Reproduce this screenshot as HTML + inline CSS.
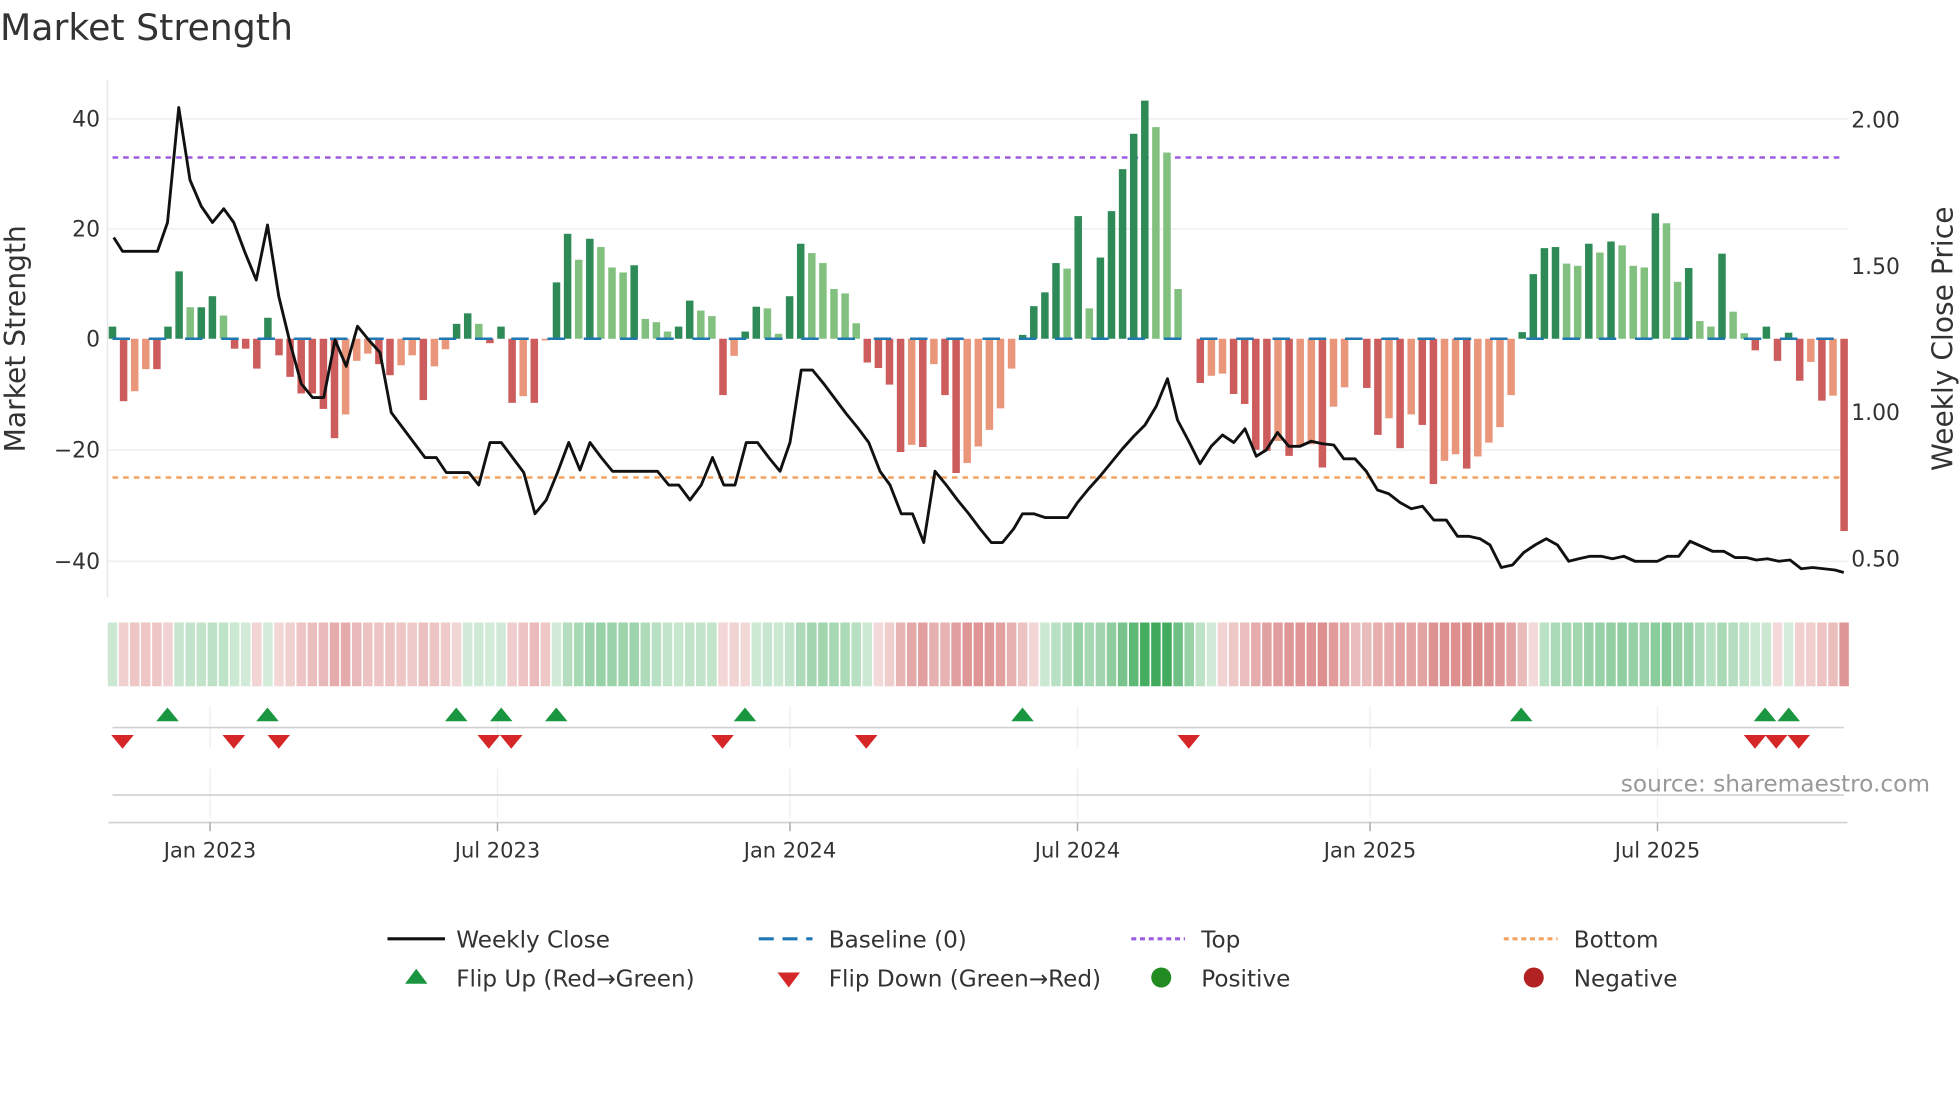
<!DOCTYPE html>
<html><head><meta charset="utf-8">
<style>
html,body{margin:0;padding:0;background:#fff;}
svg{display:block;font-family:"DejaVu Sans","Liberation Sans",sans-serif;}
</style></head>
<body>
<svg id="s" xmlns="http://www.w3.org/2000/svg" width="1960" height="1102" viewBox="0 0 1568 881.6">
<rect width="1568" height="881.6" fill="#fff"/>
<text x="0" y="32" font-size="29" fill="#333">Market Strength</text>
<line x1="86" y1="64" x2="86" y2="478" stroke="#e8e8ec" stroke-width="1.2"/>
<g stroke="#eef0f4" stroke-width="1.3">
<line x1="86" y1="95" x2="1478" y2="95"/>
<line x1="86" y1="183" x2="1478" y2="183"/>
<line x1="86" y1="360" x2="1478" y2="360"/>
<line x1="86" y1="449" x2="1478" y2="449"/>
</g>
<g font-size="17.5" fill="#333" text-anchor="end">
<text x="80" y="101">40</text>
<text x="80" y="189">20</text>
<text x="80" y="277">0</text>
<text x="80" y="366">−20</text>
<text x="80" y="455">−40</text>
</g>
<g font-size="17.5" fill="#333">
<text x="1481" y="102">2.00</text>
<text x="1481" y="219">1.50</text>
<text x="1481" y="336">1.00</text>
<text x="1481" y="453">0.50</text>
</g>
<text transform="translate(20,271) rotate(-90)" font-size="22.5" fill="#333" text-anchor="middle">Market Strength</text>
<text transform="translate(1562,271) rotate(-90)" font-size="22.5" fill="#333" text-anchor="middle">Weekly Close Price</text>
<line x1="90" y1="126" x2="1475" y2="126" stroke="#9d5ce0" stroke-width="2" stroke-dasharray="4.5,4"/>
<line x1="90" y1="382" x2="1475" y2="382" stroke="#f4a261" stroke-width="2" stroke-dasharray="4.5,4"/>
<g id="bars"></g>
<line x1="90" y1="271" x2="1475" y2="271" stroke="#1f77b4" stroke-width="2" stroke-dasharray="14,15"/>
<polyline id="price" fill="none" stroke="#111" stroke-width="2.3" stroke-linejoin="round" points=""/>
<g id="heat"></g>
<g stroke="#eef0f4" stroke-width="1.2">
<line x1="168" y1="565" x2="168" y2="598"/><line x1="398" y1="565" x2="398" y2="598"/><line x1="632" y1="565" x2="632" y2="598"/><line x1="862" y1="565" x2="862" y2="598"/><line x1="1096" y1="565" x2="1096" y2="598"/><line x1="1326" y1="565" x2="1326" y2="598"/>
<line x1="168" y1="615" x2="168" y2="655"/><line x1="398" y1="615" x2="398" y2="655"/><line x1="632" y1="615" x2="632" y2="655"/><line x1="862" y1="615" x2="862" y2="655"/><line x1="1096" y1="615" x2="1096" y2="655"/><line x1="1326" y1="615" x2="1326" y2="655"/>
</g>
<line x1="90" y1="582" x2="1475" y2="582" stroke="#d0d0d0" stroke-width="1.3"/>
<line x1="90" y1="636" x2="1475" y2="636" stroke="#d0d0d0" stroke-width="1.3"/>
<line x1="87" y1="658" x2="1478" y2="658" stroke="#d0d0d0" stroke-width="1.3"/>
<g stroke="#aaa" stroke-width="1.2">
<line x1="168" y1="658" x2="168" y2="665"/><line x1="398" y1="658" x2="398" y2="665"/><line x1="632" y1="658" x2="632" y2="665"/><line x1="862" y1="658" x2="862" y2="665"/><line x1="1096" y1="658" x2="1096" y2="665"/><line x1="1326" y1="658" x2="1326" y2="665"/>
</g>
<g id="mk"></g>
<g font-size="16.8" fill="#333" text-anchor="middle">
<text x="168" y="686">Jan 2023</text><text x="398" y="686">Jul 2023</text><text x="632" y="686">Jan 2024</text><text x="862" y="686">Jul 2024</text><text x="1096" y="686">Jan 2025</text><text x="1326" y="686">Jul 2025</text>
</g>
<text x="1544" y="633" font-size="18.6" fill="#999" text-anchor="end">source: sharemaestro.com</text>
<g font-size="18.5" fill="#333">
<line x1="310" y1="751" x2="356" y2="751" stroke="#111" stroke-width="2.5"/>
<text x="365" y="758">Weekly Close</text>
<line x1="607" y1="751" x2="650" y2="751" stroke="#1f77b4" stroke-width="2.5" stroke-dasharray="12,7"/>
<text x="663" y="758">Baseline (0)</text>
<line x1="905" y1="751" x2="948" y2="751" stroke="#9d5ce0" stroke-width="2.5" stroke-dasharray="4,3"/>
<text x="961" y="758">Top</text>
<line x1="1203" y1="751" x2="1246" y2="751" stroke="#f4a261" stroke-width="2.5" stroke-dasharray="4,3"/>
<text x="1259" y="758">Bottom</text>
<polygon points="324,787 342,787 333,775" fill="#1a9641"/>
<text x="365" y="789">Flip Up (Red→Green)</text>
<polygon points="622,778 640,778 631,790" fill="#d62728"/>
<text x="663" y="789">Flip Down (Green→Red)</text>
<circle cx="929" cy="782" r="8" fill="#228b22"/>
<text x="961" y="789">Positive</text>
<circle cx="1227" cy="782" r="8" fill="#b22222"/>
<text x="1259" y="789">Negative</text>
</g>
</svg>
<script>
var D="G2.2 R-11.3 r-9.5 r-5.5 R-5.5 G2.2 G12.2 g5.7 G5.7 G7.7 g4.2 R-1.8 R-1.8 R-5.4 G3.8 R-3 R-6.9 R-9.9 R-9.9 R-12.7 R-18 r-13.7 r-4 r-2.7 R-4.6 R-6.6 r-4.8 r-3 R-11.1 r-5 r-1.9 G2.7 G4.6 g2.7 R-0.8 G2.2 R-11.6 r-10.4 R-11.6 r-0.3 G10.2 G19 g14.3 G18.1 g16.6 g12.9 g12 G13.3 g3.6 g3 g1.3 G2.2 G6.9 g5.1 g4.1 R-10.2 r-3.1 G1.3 G5.8 g5.5 g0.9 G7.7 G17.2 g15.5 g13.7 g9 g8.2 g2.8 R-4.3 R-5.3 R-8.3 R-20.5 r-19.2 R-19.6 r-4.6 R-10.2 R-24.3 r-22.5 r-19.5 r-16.5 r-12.6 r-5.4 G0.7 G5.9 G8.4 G13.7 g12.7 G22.2 g5.5 G14.7 G23.1 G30.7 G37.1 G43.1 g38.3 g33.7 g9 r0 R-8 r-6.7 r-6.3 R-10 R-11.8 R-20.1 R-20.3 r-18.5 R-21.2 r-19.5 r-19.1 R-23.3 r-12.3 r-8.8 r0 R-8.9 R-17.4 r-14.4 R-19.8 r-13.7 R-15.6 R-26.3 r-22.1 r-20.9 R-23.5 r-21.3 r-18.8 r-16 r-10.2 G1.2 G11.7 G16.4 G16.6 g13.6 g13.2 G17.2 g15.6 G17.6 g16.9 g13.2 g12.9 G22.7 g20.9 g10.3 G12.8 g3.2 g2.2 G15.4 g4.9 g1 R-2.1 G2.2 R-4 G1.1 R-7.6 r-4.2 R-11.2 r-10.3 R-34.8".split(" ");
var C={G:"#2e8b57",g:"#81c07f",R:"#cd5c5c",r:"#e9967a"};
var bars="",heat="",ema=0;
function mix(c,t){return "rgb("+c.map(function(v){return Math.round(255+(v-255)*t)}).join(",")+")";}
for(var i=0;i<D.length;i++){var k=D[i][0],v=parseFloat(D[i].slice(1));var x=90+i*8.88;var h=v*4.42;
if(Math.abs(h)>0.3){var y=h>0?271-h:271;bars+='<rect x="'+(x-3).toFixed(2)+'" y="'+y.toFixed(2)+'" width="6" height="'+Math.abs(h).toFixed(2)+'" fill="'+C[k]+'"/>';}
ema=i==0?v:ema*0.6+v*0.4;var t=Math.min(1,0.22+Math.abs(ema)/45);
var col=ema>=0?mix([65,171,93],t):mix([205,90,90],t);
heat+='<rect x="'+(x-3.8).toFixed(2)+'" y="498" width="7.6" height="51" fill="'+col+'"/>';}
document.getElementById("bars").innerHTML=bars;document.getElementById("heat").innerHTML=heat;
var P=[[91,190],[98,201],[126,201],[134,178],[143,86],[152,144],[161,165],[170,178],[179,167],[187,178],[196,202],[205,224],[214,180],[223,237],[232,274],[241,307],[250,318],[259,318],[268,272],[277,293],[286,261],[295,272],[304,282],[313,330],[322,342],[331,354],[340,366],[349,366],[357,378],[375,378],[383,388],[392,354],[401,354],[410,366],[419,378],[428,411],[437,400],[446,378],[455,354],[464,376],[472,354],[481,366],[490,377],[526,377],[535,388],[543,388],[552,400],[561,388],[570,366],[579,388],[588,388],[597,354],[606,354],[615,366],[624,377],[632,354],[641,296],[650,296],[659,307],[668,319],[677,331],[686,342],[695,354],[704,377],[712,388],[721,411],[730,411],[739,434],[748,377],[757,388],[766,400],[775,411],[784,423],[793,434],[802,434],[811,423],[818,411],[827,411],[836,414],[854,414],[862,402],[871,391],[880,381],[889,370],[898,359],[907,349],[916,340],[925,325],[934,303],[942,336],[951,353],[960,371],[969,357],[978,348],[987,354],[996,343],[1005,365],[1013,360],[1022,346],[1031,357],[1040,357],[1049,353],[1058,355],[1067,356],[1075,367],[1084,367],[1093,377],[1102,392],[1111,395],[1120,402],[1129,407],[1138,405],[1147,416],[1157,416],[1166,429],[1175,429],[1184,431],[1192,436],[1201,454],[1210,452],[1219,442],[1228,436],[1237,431],[1246,436],[1255,449],[1263,447],[1272,445],[1281,445],[1290,447],[1299,445],[1308,449],[1317,449],[1326,449],[1334,445],[1343,445],[1352,433],[1361,437],[1370,441],[1379,441],[1388,446],[1397,446],[1405,448],[1414,447],[1423,449],[1432,448],[1441,455],[1450,454],[1459,455],[1468,456],[1475,458]];
document.getElementById("price").setAttribute("points",P.map(function(p){return p.join(",")}).join(" "));
var up=[134,214,365,401,445,596,818,1217,1412,1431],dn=[98,187,223,391,409,578,693,951,1404,1421,1439],m="";
up.forEach(function(x){m+='<polygon points="'+(x-9)+',577 '+(x+9)+',577 '+x+',566" fill="#1a9641"/>';});
dn.forEach(function(x){m+='<polygon points="'+(x-9)+',588 '+(x+9)+',588 '+x+',599" fill="#d62728"/>';});
document.getElementById("mk").innerHTML=m;
</script>
</body></html>
